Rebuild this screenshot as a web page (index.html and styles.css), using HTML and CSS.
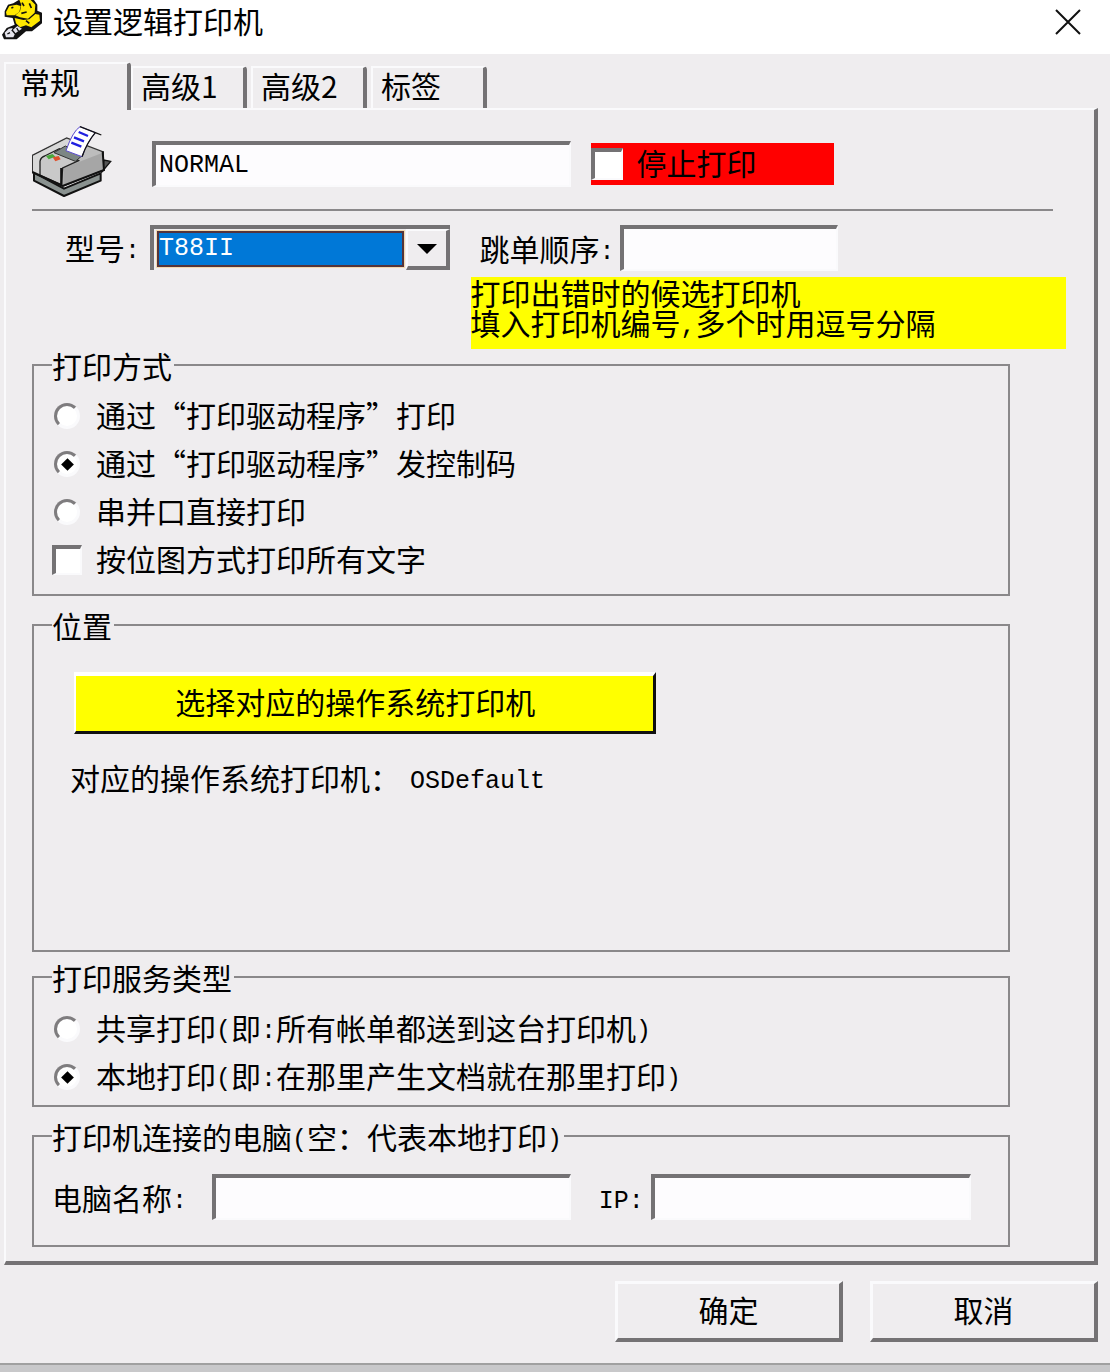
FILE: index.html
```
<!DOCTYPE html>
<html lang="zh-CN">

<head>
    <meta charset="UTF-8">
    <meta name="viewport" content="width=device-width, initial-scale=1.0">
    <title>设置逻辑打印机</title>
    <link rel="stylesheet" href="styles.css">
</head>

<body>
    <div class="window">
        <header class="titlebar">
            <svg class="logo" viewBox="0 0 129 120" aria-hidden="true">
                <path d="M14 34 L24 14 L40 10 L56 0 L102 0 L112 14 L112 32 L126 38 L126 70 L96 94 L78 94 L50 118 L12 118 L6 104 L20 84 L44 74 L38 54 L14 50 Z" fill="#111" />
                <path d="M18 36 L28 18 L50 14 L62 18 L58 36 L44 46 L20 46 Z" fill="#ffe800" />
                <path d="M58 0 L92 0 L106 14 L104 38 L84 56 L60 52 L46 46 L60 34 L64 14 Z" fill="#ffe800" />
                <path d="M44 54 L70 60 L88 58 L106 42 L118 44 L120 62 L94 82 L78 76 L60 82 L48 70 Z" fill="#ffe800" />
                <path d="M14 98 L26 86 L38 84 L34 94 L52 78 L66 86 L46 100 L40 112 L18 112 Z" fill="#e4e4ec" />
                <path d="M66 8 L72 18 M88 10 L94 24 M34 24 L40 22 M64 40 L80 36 M78 62 L88 70" stroke="#111" stroke-width="5" />
                <path d="M22 102 L30 98 M36 90 L46 102 M50 84 L56 94" stroke="#111" stroke-width="4" />
            </svg>
            <h1>设置逻辑打印机</h1>
            <button type="button" class="close" aria-label="关闭">
                <svg viewBox="0 0 26 26" aria-hidden="true">
                    <path d="M1 1 L25 25 M25 1 L1 25" stroke="#111" stroke-width="2" />
                </svg>
            </button>
        </header>

        <form class="dialog">
            <div class="tabs" role="tablist">
                <button type="button" class="tab active" role="tab" aria-selected="true">常规</button>
                <button type="button" class="tab" role="tab">高级1</button>
                <button type="button" class="tab" role="tab">高级2</button>
                <button type="button" class="tab" role="tab">标签</button>
            </div>

            <div class="panel">
                <div class="name-row">
                    <svg class="printer" viewBox="96 12 240 225" aria-hidden="true">
                        <path d="M102 158 L102 182 L192 228 L302 182 L302 160 L192 206 Z" fill="#8a9290" stroke="#111" stroke-width="6" stroke-linejoin="round" />
                        <path d="M304 158 L332 124 L312 120 Z" fill="#555" stroke="#111" stroke-width="4" />
                        <path d="M97 106 L200 54 L310 96 L310 150 L190 198 L97 158 Z" fill="#bdbdbd" stroke="#333" stroke-width="4" />
                        <path d="M99 108 L200 57 L226 68 L130 112 L120 122 L120 164 L99 156 Z" fill="#d8d8d8" />
                        <path d="M190 144 L308 98 L308 148 L190 196 Z" fill="#a6a6a6" />
                        <path d="M120 124 Q122 112 134 108 L178 86 L236 122 L188 144 L184 194 L120 166 Z" fill="#c9c9c9" stroke="#222" stroke-width="4" />
                        <path d="M97 156 L188 198 L312 150 L308 94" fill="none" stroke="#111" stroke-width="6" />
                        <path d="M184 144 L184 194" stroke="#111" stroke-width="7" />
                        <path d="M162 98 L196 78 L250 104 L226 124 Z" fill="#7c8684" stroke="#333" stroke-width="3" />
                        <path d="M138 108 L158 102 L166 110 L146 118 Z" fill="#4aa83c" />
                        <path d="M158 112 L176 108 L182 118 L166 124 Z" fill="#e0502c" />
                        <path d="M198 92 Q218 34 240 20 L286 38 Q262 66 246 110 Z" fill="#fff" stroke="#5a4ad0" stroke-width="3" />
                        <path d="M240 20 L286 38 L304 45 M286 38 Q262 66 246 110" fill="none" stroke="#111" stroke-width="4" />
                        <path d="M236 36 L264 48 M222 52 L252 64 M214 68 L244 80" stroke="#2020e0" stroke-width="7" />
                    </svg>
                    <input type="text" class="name-input" aria-label="打印机名称" value="NORMAL">
                    <label class="stop"><input type="checkbox"><span>停止打印</span></label>
                </div>

                <hr>

                <div class="model-row">
                    <div class="model">
                        <label for="model">型号<span class="latin">:</span></label>
                        <div class="combo">
                            <select id="model" name="model">
                                <option>T88II</option>
                            </select>
                            <span class="arrow" aria-hidden="true"></span>
                        </div>
                    </div>
                    <div class="order">
                        <div class="order-field">
                            <label for="order">跳单顺序<span class="latin">:</span></label>
                            <input type="text" id="order" name="order">
                        </div>
                        <p class="hint">打印出错时的候选打印机<br>填入打印机编号<span class="latin">,</span>多个时用逗号分隔</p>
                    </div>
                </div>

                <fieldset class="method">
                    <legend>打印方式</legend>
                    <label class="option"><input type="radio" name="method"><span>通过“打印驱动程序”打印</span></label>
                    <label class="option"><input type="radio" name="method" checked><span>通过“打印驱动程序”发控制码</span></label>
                    <label class="option"><input type="radio" name="method"><span>串并口直接打印</span></label>
                    <label class="option"><input type="checkbox" name="bitmap"><span>按位图方式打印所有文字</span></label>
                </fieldset>

                <fieldset class="location">
                    <legend>位置</legend>
                    <button type="button" class="choose">选择对应的操作系统打印机</button>
                    <p class="current">对应的操作系统打印机：<span class="latin os-name">OSDefault</span></p>
                </fieldset>

                <fieldset class="service">
                    <legend>打印服务类型</legend>
                    <label class="option"><input type="radio" name="service"><span>共享打印<span class="latin">(</span>即<span class="latin">:</span>所有帐单都送到这台打印机<span class="latin">)</span></span></label>
                    <label class="option"><input type="radio" name="service" checked><span>本地打印<span class="latin">(</span>即<span class="latin">:</span>在那里产生文档就在那里打印<span class="latin">)</span></span></label>
                </fieldset>

                <fieldset class="computer">
                    <legend>打印机连接的电脑<span class="latin">(</span>空：代表本地打印<span class="latin">)</span></legend>
                    <div class="computer-row">
                        <label for="host" class="host-label">电脑名称<span class="latin">:</span></label>
                        <input type="text" id="host" name="host" class="host-input">
                        <label for="ip" class="ip-label"><span class="latin">IP:</span></label>
                        <input type="text" id="ip" name="ip" class="ip-input">
                    </div>
                </fieldset>
            </div>

            <div class="actions">
                <button type="submit">确定</button>
                <button type="button">取消</button>
            </div>
        </form>
    </div>
</body>

</html>
```
FILE: styles.css
```
* {
    box-sizing: border-box;
}

body {
    margin: 0;
    background: #c8c8ca;
    font-family: "Noto Sans CJK SC", sans-serif;
    font-size: 30px;
    line-height: 30px;
    color: #000;
}

.window {
    background: #efedef;
    border-bottom: 2px solid #a0a0a0;
    margin-bottom: 7px;
}

h1,
p {
    margin: 0;
    font-size: 30px;
    font-weight: normal;
}

button,
input,
select {
    font: inherit;
    color: inherit;
    margin: 0;
    border-radius: 0;
}

/* Half-width characters take half of a 30px cell */
.latin,
input[type="text"],
select {
    font-family: "Liberation Mono", monospace;
    font-size: 25px;
}

.latin {
    line-height: 0;
    vertical-align: 2px;
}

/* Title bar */
.titlebar {
    display: flex;
    align-items: center;
    height: 54px;
    padding-right: 29px;
    padding-bottom: 10px;
    background: #fff;
}

.titlebar h1 {
    padding-bottom: 4px;
}

.logo {
    width: 43px;
    height: 40px;
    margin-right: 10px;
    align-self: flex-start;
}

.close {
    margin-left: auto;
    padding: 0;
    border: none;
    background: none;
}

.close svg {
    display: block;
    width: 26px;
    height: 26px;
}

/* Tabs */
.dialog {
    padding: 8px 12px 21px 4px;
}

.tabs {
    display: flex;
    align-items: flex-end;
    height: 46px;
}

.tab {
    width: 116px;
    height: 42px;
    margin-right: 4px;
    padding: 0 0 6px 8px;
    text-align: left;
    background: #efedef;
    border: solid;
    border-width: 2px 4px 0 2px;
    border-color: #fafafc #747274 #fafafc #fafafc;
    border-top-right-radius: 4px;
}

.tab.active {
    position: relative;
    width: 127px;
    height: 48px;
    margin-right: 0;
    margin-bottom: -2px;
    padding: 0 0 12px 14px;
}

.panel {
    padding: 14px 28px 14px 26px;
    border: solid;
    border-width: 2px 4px 4px 2px;
    border-color: #fafafc #747274 #747274 #fafafc;
}

/* Sunken boxes */
input[type="text"] {
    min-width: 0;
    height: 46px;
    padding: 0 3px;
    background: #fdfcfe;
    border: solid;
    border-width: 4px 2px 2px 4px;
    border-color: #747274 #fafafc #fafafc #747274;
    outline: none;
}

input[type="checkbox"] {
    appearance: none;
    flex: none;
    width: 30px;
    height: 30px;
    background: #fff;
    border: solid;
    border-width: 4px 2px 2px 4px;
    border-color: #747274 #fafafc #fafafc #747274;
}

input[type="radio"] {
    appearance: none;
    flex: none;
    display: grid;
    place-items: center;
    width: 26px;
    height: 26px;
    margin: 0 2px;
    background: #fff;
    border: 3px solid;
    border-color: #7e7c7e #fafafc #fafafc #7e7c7e;
    border-radius: 50%;
}

input[type="radio"]:checked::before {
    content: "";
    width: 9px;
    height: 9px;
    background: #000;
    transform: rotate(45deg);
}

/* Name row */
.name-row {
    display: flex;
    align-items: center;
    height: 80px;
    padding-right: 232px;
}

.printer {
    flex: none;
    width: 80px;
    height: 75px;
    margin-right: 40px;
    align-self: flex-start;
}

.name-input {
    flex: 414;
    margin-right: 20px;
}

.stop {
    flex: 248;
    display: flex;
    align-items: center;
    gap: 14px;
    height: 42px;
    background: #f00;
}

.stop input[type="checkbox"] {
    width: 32px;
    height: 32px;
}

.stop span,
.option span {
    padding-bottom: 4px;
}

.option .latin {
    padding-bottom: 0;
}

hr {
    margin: 5px 13px 14px 0;
    border: none;
    border-top: 2px solid #8a888a;
}

/* Model and fallback order */
.model-row {
    display: grid;
    grid-template-columns: minmax(0, 439fr) minmax(0, 596fr);
}

.model {
    display: flex;
    align-items: flex-start;
    padding: 0 21px 0 33px;
}

.model label {
    flex: none;
    width: 85px;
    line-height: 44px;
}

.combo {
    flex: 1;
    display: flex;
    height: 45px;
    border: solid #747274;
    border-width: 4px 0 0 4px;
}

.combo select {
    appearance: none;
    flex: 1;
    min-width: 0;
    margin: 2px 2px 3px 3px;
    padding: 0;
    background: #0078d7;
    color: #fff;
    border: 2px solid #55343a;
    outline: 1px solid #f3d9b0;
}

.arrow {
    display: grid;
    place-items: center;
    width: 44px;
    border: solid;
    border-width: 2px 4px 4px 2px;
    border-color: #fafafc #747274 #747274 #fafafc;
}

.arrow::before {
    content: "";
    border: solid transparent;
    border-width: 10px 10px 0;
    border-top-color: #000;
}

.order-field {
    display: flex;
    padding: 0 228px 6px 9px;
}

.order-field label {
    flex: none;
    width: 140px;
    line-height: 46px;
}

.order-field input {
    flex: 1;
}

.hint {
    height: 72px;
    white-space: nowrap;
    background: #ff0;
}

/* Groups */
fieldset {
    min-width: 0;
    margin: 14px 56px 0 0;
    border: 2px solid #8a888a;
}

legend {
    padding: 0 2px 0 0;
}

.option {
    display: flex;
    align-items: center;
    gap: 14px;
    height: 48px;
}

.method {
    margin-top: 1px;
    padding: 12px 18px 10px;
}

.location {
    padding: 32px 18px 158px;
}

.choose {
    display: block;
    width: 62%;
    height: 62px;
    margin-left: 22px;
    padding: 0 18px 6px 0;
    background: #ff0;
    border: solid;
    border-width: 4px 3px 3px 2px;
    border-color: #fff #111 #111 #fff;
}

.current {
    margin: 28px 0 0 18px;
}

.os-name {
    margin-left: 10px;
}

.service {
    margin-top: 10px;
    padding: 13px 18px 4px;
}

.computer {
    padding: 23px 37px 25px 18px;
}

.computer-row {
    display: flex;
    align-items: center;
}

.host-label {
    flex: none;
    width: 160px;
}

.host-input {
    flex: 360;
}

.ip-label {
    flex: none;
    width: 80px;
    padding-left: 28px;
}

.ip-input {
    flex: 320;
}

/* Bottom buttons */
.actions {
    display: flex;
    justify-content: flex-end;
    gap: 27px;
    padding-top: 16px;
}

.actions button {
    width: 228px;
    height: 61px;
    padding-bottom: 6px;
    background: #efedef;
    border: solid;
    border-width: 3px 4px 4px 3px;
    border-color: #fafafc #747274 #747274 #fafafc;
}
```
